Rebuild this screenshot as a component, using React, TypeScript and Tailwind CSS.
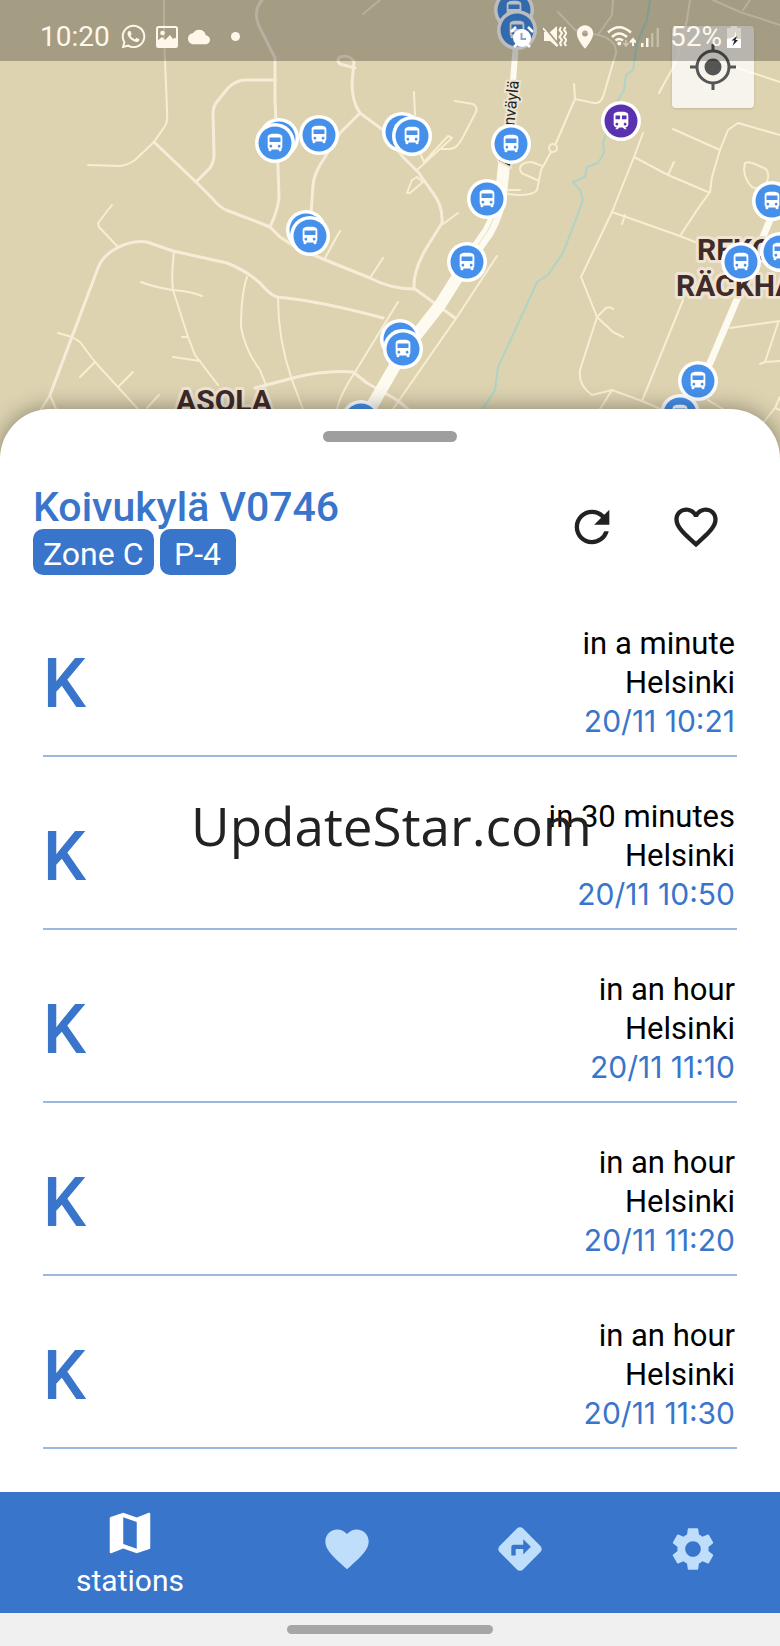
import type { ReactNode } from "react";
import { FaWhatsapp } from "react-icons/fa";
import {
  MdCloud,
  MdDirections,
  MdDirectionsBus,
  MdFavorite,
  MdFavoriteBorder,
  MdLocationOn,
  MdMap,
  MdRefresh,
  MdSettings,
  MdTrain,
} from "react-icons/md";

interface Pin {
  x: number;
  y: number;
  train?: boolean;
}

interface Departure {
  relative: string;
  destination: string;
  time: string;
}

const thinRoads: string[] = [
  "M164 0V40L165 60L167 110Q168 121 165 126L154 142L135 160Q128 165 120 166L88 165",
  "M363 14L380 0",
  "M414 92L415 115",
  "M455 101L473 104Q478 107 476 112L463 137Q457 149 450 149H440",
  "M421 155L424 162L448 136L452 138L417 170",
  "M407 193L412 180L417 177L423 182L410 193Z",
  "M508 190H520M508 194Q532 197 537 190L541 170L551 152M542 166L532 162Q521 162 520 168Q520 174 526 175L537 180",
  "M556 143L575 99L574 84M575 99L594 103Q600 104 603 97L616 53Q617 43 605 37L598 35L612 15L613 0M558 12L575 30L598 35",
  "M690 0L687 20L677 60L659 93",
  "M713 0L740 12L780 25M743 10L750 0M720 62L780 82",
  "M673 129L720 150M780 135L738 123L728 130L720 150L712 177L710 192L697 210L680 236",
  "M643 133L634 157L612 212L581 277L597 317L580 370Q578 385 592 395L612 390L642 401L663 410M612 390L600 409",
  "M634 157L668 175L708 192M668 175L674 162",
  "M745 163Q748 161 755 164L766 169Q769 173 768 178L765 187Q756 190 752 187Q745 180 744 170Z",
  "M612 212L680 236L700 244M625 215L622 224",
  "M597 317L606 308Q610 306 613 309M597 317L613 332L623 337",
  "M683 300L642 401",
  "M730 328L780 321M778 323L765 362L780 361M760 364L765 362",
  "M708 400L723 409M780 397L775 408L763 423M775 408L780 410",
  "M112 205L98 223L99 227L118 247",
  "M50 395L40 411M50 395L57 411",
  "M58 333L72 337L80 342L95 362L138 409M95 362L80 377M118 387L133 372M159 395L147 408",
  "M174 252Q171 275 173 290L188 337L195 355L218 385M141 282Q150 286 172 290Q190 291 202 296M182 337H188M173 357L200 361",
  "M247 277Q241 295 241 327Q245 350 260 370L266 385",
  "M278 298Q278 340 292 380L303 409",
  "M398 302L355 372Q340 395 337 409",
  "M497 256L457 317L393 409",
  "M340 231L325 258M383 258L370 278M458 213L443 224",
];

const streets: string[] = [
  "M154 142L196 182L213 199Q218 206 226 210L260 223L270 227L280 237L297 248L323 259L370 278Q390 289 415 289L437 305L455 318",
  "M275 80H246Q236 80 228 88L216 103Q213 108 213 112L214 155Q214 162 210 168L196 182",
  "M262 0Q252 12 260 28L275 58V100L278 167L279 197Q278 210 270 227",
  "M355 68L340 64Q336 60 340 57Q350 54 354 62L352 83Q352 102 360 113L340 133L325 157Q314 173 313 185L311 215",
  "M360 113L383 130L403 157L418 172L433 193Q443 206 442 223L427 247Q413 270 414 289",
  "M50 395L98 268Q103 255 117 248Q132 240 147 242L173 251L227 263Q245 270 260 283Q270 295 277 297Q320 301 383 318",
  "M255 388L293 378Q325 370 353 372L367 383L397 400L408 409",
];

const pins: Pin[] = [
  { x: 514, y: 10 },
  { x: 517, y: 30 },
  { x: 279, y: 138 },
  { x: 275, y: 143 },
  { x: 319, y: 135 },
  { x: 402, y: 132 },
  { x: 412, y: 136 },
  { x: 511, y: 144 },
  { x: 487, y: 199 },
  { x: 306, y: 230 },
  { x: 310, y: 236 },
  { x: 467, y: 262 },
  { x: 400, y: 339 },
  { x: 403, y: 349 },
  { x: 361, y: 420 },
  { x: 621, y: 121, train: true },
  { x: 772, y: 201 },
  { x: 780, y: 252 },
  { x: 741, y: 262 },
  { x: 680, y: 414 },
  { x: 698, y: 381 },
];

const departures: Departure[] = [
  { relative: "in a minute", destination: "Helsinki", time: "20/11 10:21" },
  { relative: "in 30 minutes", destination: "Helsinki", time: "20/11 10:50" },
  { relative: "in an hour", destination: "Helsinki", time: "20/11 11:10" },
  { relative: "in an hour", destination: "Helsinki", time: "20/11 11:20" },
  { relative: "in an hour", destination: "Helsinki", time: "20/11 11:30" },
];

function MapPin({ x, y, train }: Pin) {
  const Icon = train ? MdTrain : MdDirectionsBus;
  return (
    <g transform={`translate(${x} ${y})`}>
      <circle r="20" fill="#fff" />
      <circle r="16.5" fill={train ? "#5a32b0" : "#4590ea"} />
      <Icon x={-11} y={-11} size={22} color="#fff" />
    </g>
  );
}

function StationMap() {
  return (
    <svg
      className="block h-[460px] w-full bg-[#ddd3b1]"
      viewBox="0 0 780 460"
      preserveAspectRatio="xMidYMin slice"
      role="img"
      aria-label="Map of stations"
    >
      <g fill="none" strokeLinejoin="round" strokeLinecap="round">
        <path
          d="M650 0L647 20L637 43L633 70L626 75L624 90L618 100L611 122L603 143L604 153L598 163L587 167L585 177L573 182L580 190L583 200L573 227L563 253L548 275L537 282L523 313L498 367L495 390L482 410"
          stroke="#b0d3c6"
          strokeWidth="2"
        />
        {thinRoads.map((d) => (
          <path key={d} d={d} stroke="#f8eed3" strokeWidth="2" />
        ))}
        {streets.map((d) => (
          <path key={d} d={d} stroke="#f8ecd9" strokeWidth="3" />
        ))}
        <circle cx="553" cy="148" r="4" stroke="#f8eed3" strokeWidth="2" />
        <path d="M517 30L510 120L506 160" stroke="#fdfaf0" strokeWidth="6" />
        <path d="M505 155L501 195Q498 214 488 232L467 262L440 305L403 352L366 416" stroke="#fdfaf0" strokeWidth="12" />
        <path d="M500 197Q497 214 487 232L462 268" stroke="#e8dfc8" strokeWidth="1" />
        <path d="M772 215L741 290L710 363L680 414" stroke="#fdfaf0" strokeWidth="7" />
      </g>
      <g
        fontFamily="Roboto, sans-serif"
        fontWeight="700"
        fontSize="30"
        fill="#3f2b2a"
        stroke="#efe4d2"
        strokeWidth="6"
        strokeLinejoin="round"
        paintOrder="stroke"
      >
        <text x="176" y="411">ASOLA</text>
        <text x="697" y="260">REKO</text>
        <text x="676" y="296">RÄCKHA</text>
      </g>
      <text
        transform="translate(519 81) rotate(-84)"
        textAnchor="end"
        fontFamily="Roboto, sans-serif"
        fontSize="16"
        fill="#222"
        stroke="#efe4d2"
        strokeWidth="4"
        paintOrder="stroke"
      >
        Asolanväylä
      </text>
      {pins.map((pin) => (
        <MapPin key={`${pin.x}-${pin.y}`} {...pin} />
      ))}
    </svg>
  );
}

function StatusBar() {
  return (
    <div className="absolute inset-x-0 top-0 flex h-[61px] items-center justify-between bg-black/26 pt-3 pr-[38px] pl-10 text-[#fff8ea]">
      <div className="flex items-center">
        <span className="text-[28px] leading-7">10:20</span>
        <FaWhatsapp className="ml-[10px] size-[27px]" />
        <svg className="ml-2 size-6" viewBox="0 0 24 24" fill="none" stroke="currentColor">
          <rect x="2" y="2" width="20" height="20" rx="1.5" strokeWidth="2" />
          <circle cx="7.5" cy="8" r="2.3" fill="currentColor" stroke="none" />
          <path d="M2 16L7 12L10 15L15 10L18 14L20 12.5L22 15V22H2Z" fill="currentColor" stroke="none" />
        </svg>
        <MdCloud className="ml-2 h-[22px] w-6" />
        <span className="ml-5 size-[9px] rounded-full bg-[#fff8ea]" />
      </div>
      <div className="flex items-center">
        <svg className="h-6 w-[26px]" viewBox="0 0 26 24">
          <circle cx="13" cy="13" r="9" fill="#fff" />
          <path d="M2 7L7 2M24 7L19 2M5 22L8 19M21 22L18 19" stroke="#fff" strokeWidth="2.5" />
          <path d="M12.5 8V14H17" fill="none" stroke="#8fa3bd" strokeWidth="2" />
        </svg>
        <svg className="ml-2 h-6 w-6" viewBox="0 0 24 24" fill="currentColor">
          <path d="M1 7H7L14 1V22L7 16H1Z" />
          <path d="M1 2L16 20" stroke="#a39b83" strokeWidth="2" />
          <path d="M0 3L15 21" stroke="currentColor" strokeWidth="1.5" />
          <path
            d="M18 2L16.500 5L19 8L16.500 12L19 15L17 18L18.500 21M22.500 2L21 5L23.500 8L21 12L23.500 15L21.500 18L23 21"
            fill="none"
            stroke="currentColor"
            strokeWidth="2"
          />
        </svg>
        <MdLocationOn className="ml-1 size-7" />
        <svg className="ml-2 h-6 w-[29px]" viewBox="0 0 29 24" fill="none" stroke="currentColor" strokeWidth="2.5">
          <path d="M1 7.500Q12 -3 24 7.500M5 12Q12 5 20 12M8.500 15.500Q12 12.500 16 15.500" />
          <circle cx="12.3" cy="18.5" r="2" fill="currentColor" stroke="none" />
          <path d="M19 15V20M16.500 18L19 21L21.500 18" strokeWidth="1.5" opacity="0.5" />
          <path d="M26 21V15M23 17.500L26 14L29 17.500" strokeWidth="2" />
        </svg>
        <svg className="ml-1 h-6 w-5" viewBox="0 0 20 24" fill="currentColor">
          <path d="M1 18h2.500v4H1zM6 13h2.500v9H6z" />
          <path d="M11 8h2.500v14H11zM16.500 3H19v19h-2.500z" opacity="0.35" />
        </svg>
        <span className="ml-[10px] text-[28px] leading-7">52%</span>
        <svg className="ml-1 h-6 w-4" viewBox="0 0 16 24">
          <path d="M5 1H11V3H15V23H1V3H5Z" fill="#fff8ea" opacity="0.45" />
          <path d="M1 14L8 12L10 6V14H15V23H1Z" fill="#fff" />
          <path d="M11 11L5.500 15.500H8.500L6.500 21L12 15H9.500Z" fill="#222" />
        </svg>
      </div>
    </div>
  );
}

function LocateButton() {
  return (
    <button
      aria-label="My location"
      className="absolute top-[26px] right-[26px] flex size-[82px] items-center justify-center rounded bg-white/75 shadow"
    >
      <svg className="size-[46px]" viewBox="0 0 46 46" fill="none" stroke="#555" strokeWidth="3">
        <circle cx="23" cy="23" r="16" />
        <circle cx="23" cy="23" r="8.5" fill="#555" stroke="none" />
        <path d="M23 0V7M23 39V46M0 23H7M39 23H46" />
      </svg>
    </button>
  );
}

function Badge({ children }: { children: ReactNode }) {
  return (
    <span className="min-w-[76px] rounded-[10px] bg-[#3875cb] px-[10px] pt-1 text-center text-[32px] leading-[42px] text-white">
      {children}
    </span>
  );
}

function DepartureRow({ relative, destination, time }: Departure) {
  return (
    <li className="flex items-center justify-between border-b-2 border-[#9bb9dc] pt-10 pr-[2px] pb-[14px] text-[31px] leading-[39px]">
      <span className="pt-[2px] text-[68px] leading-[78px] font-medium text-[#3875cb]">K</span>
      <div className="text-right text-black">
        <p>{relative}</p>
        <p>{destination}</p>
        <p className="font-[Inter,sans-serif] text-[30px] text-[#3875cb]">{time}</p>
      </div>
    </li>
  );
}

function BottomNav() {
  return (
    <nav className="relative grid h-[121px] grid-cols-[3fr_2fr_2fr_2fr] bg-[#3875cb] text-[#bfdefb]">
      <a href="#stations" className="flex flex-col items-center gap-[5px] pt-[14px] text-[30px] leading-8 text-white">
        <MdMap className="size-[54px]" />
        stations
      </a>
      <a href="#favorites" aria-label="Favorites" className="flex items-center justify-center pb-2">
        <MdFavorite className="size-[52px]" />
      </a>
      <a href="#directions" aria-label="Directions" className="flex items-center justify-center pb-2">
        <MdDirections className="size-[52px]" />
      </a>
      <a href="#settings" aria-label="Settings" className="flex items-center justify-center pb-2">
        <MdSettings className="size-[52px]" />
      </a>
    </nav>
  );
}

export default function App() {
  return (
    <div className="overflow-hidden bg-white font-[Roboto,sans-serif]">
      <div className="relative">
        <StationMap />
        <LocateButton />
        <StatusBar />
      </div>

      <main className="relative -mt-[51px] rounded-t-[50px] bg-white pt-[22px] pb-[43px] shadow-[0_0_22px_rgba(0,0,0,0.4)]">
        <div className="mx-auto h-[11px] w-[134px] rounded-full bg-[#9e9e9e]" />

        <header className="mt-[43px] flex items-start justify-between pr-[58px] pl-[33px]">
          <div>
            <h1 className="text-[41px] leading-[44px] font-medium text-[#3875cb]">Koivukylä V0746</h1>
            <div className="flex gap-[6px]">
              <Badge>Zone C</Badge>
              <Badge>P-4</Badge>
            </div>
          </div>
          <div className="mt-4 flex gap-[52px] text-[#222]">
            <button aria-label="Refresh">
              <MdRefresh className="size-[52px]" />
            </button>
            <button aria-label="Add to favorites">
              <MdFavoriteBorder className="size-[52px]" />
            </button>
          </div>
        </header>

        <ul className="mx-[43px] mt-[9px]">
          {departures.map((departure) => (
            <DepartureRow key={departure.time} {...departure} />
          ))}
        </ul>

        <p className="pointer-events-none absolute top-[381px] left-[191px] font-['Open_Sans',sans-serif] text-[53px] leading-[72px] text-[#222]">
          UpdateStar.com
        </p>
      </main>

      <BottomNav />
      <footer className="flex h-[33px] items-center justify-center bg-[#f0f0f0]">
        <div className="h-[9px] w-[206px] rounded-full bg-[#a6a6a6]" />
      </footer>
    </div>
  );
}
